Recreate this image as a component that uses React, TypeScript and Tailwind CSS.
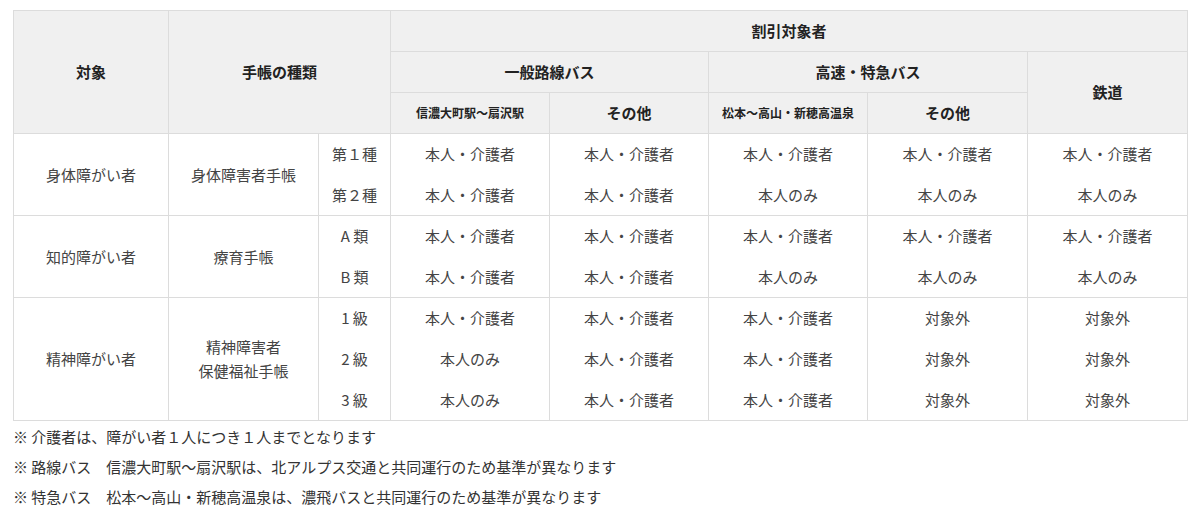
import React from 'react'

type Row = { grade: string; cells: string[] }
type Group = { target: string; book: React.ReactNode; rows: Row[] }

const both = '本人・介護者'
const self = '本人のみ'
const none = '対象外'

const groups: Group[] = [
  {
    target: '身体障がい者',
    book: '身体障害者手帳',
    rows: [
      { grade: '第１種', cells: [both, both, both, both, both] },
      { grade: '第２種', cells: [both, both, self, self, self] },
    ],
  },
  {
    target: '知的障がい者',
    book: '療育手帳',
    rows: [
      { grade: 'A 類', cells: [both, both, both, both, both] },
      { grade: 'B 類', cells: [both, both, self, self, self] },
    ],
  },
  {
    target: '精神障がい者',
    book: (
      <>
        精神障害者
        <br />
        保健福祉手帳
      </>
    ),
    rows: [
      { grade: '1 級', cells: [both, both, both, none, none] },
      { grade: '2 級', cells: [self, both, both, none, none] },
      { grade: '3 級', cells: [self, both, both, none, none] },
    ],
  },
]

const notes = [
  '※ 介護者は、障がい者１人につき１人までとなります',
  '※ 路線バス　信濃大町駅～扇沢駅は、北アルプス交通と共同運行のため基準が異なります',
  '※ 特急バス　松本～高山・新穂高温泉は、濃飛バスと共同運行のため基準が異なります',
]

const th = 'border border-[#dcdcdc] bg-[#f0f0f0] font-bold text-[#222] text-center align-middle'
const td = 'border-x border-[#dcdcdc] text-center align-middle text-[#444] font-normal'

export default function App() {
  return (
    <div className="bg-white min-h-[514px] pt-[10px] pl-[13px] text-[15px] [font-family:'Noto_Sans_CJK_JP',sans-serif] text-[#444]">
      <table className="table-fixed border-collapse w-[1174px]">
        <colgroup>
          <col className="w-[155px]" />
          <col className="w-[150px]" />
          <col className="w-[72px]" />
          <col className="w-[159px]" />
          <col className="w-[159px]" />
          <col className="w-[159px]" />
          <col className="w-[160px]" />
          <col className="w-[160px]" />
        </colgroup>
        <thead>
          <tr className="h-[41px]">
            <th rowSpan={3} className={th}>対象</th>
            <th rowSpan={3} colSpan={2} className={th}>手帳の種類</th>
            <th colSpan={5} className={th}>割引対象者</th>
          </tr>
          <tr className="h-[41px]">
            <th colSpan={2} className={th}>一般路線バス</th>
            <th colSpan={2} className={th}>高速・特急バス</th>
            <th rowSpan={2} className={th}>鉄道</th>
          </tr>
          <tr className="h-[41px]">
            <th className={`${th} text-[12px]`}>信濃大町駅～扇沢駅</th>
            <th className={th}>その他</th>
            <th className={`${th} text-[12px]`}>松本～高山・新穂高温泉</th>
            <th className={th}>その他</th>
          </tr>
        </thead>
        <tbody>
          {groups.map((g) =>
            g.rows.map((r, i) => {
              const edge = `${i === 0 ? 'border-t' : ''} ${i === g.rows.length - 1 ? 'border-b' : ''}`
              return (
                <tr key={g.target + i} className="h-[41px]">
                  {i === 0 && (
                    <>
                      <td rowSpan={g.rows.length} className={`${td} border-y leading-[24px]`}>{g.target}</td>
                      <td rowSpan={g.rows.length} className={`${td} border-y leading-[24px]`}>{g.book}</td>
                    </>
                  )}
                  <td className={`${td} ${edge}`}>{r.grade}</td>
                  {r.cells.map((c, j) => (
                    <td key={j} className={`${td} ${edge}`}>{c}</td>
                  ))}
                </tr>
              )
            })
          )}
        </tbody>
      </table>
      <div className="mt-[1px] leading-[30px] text-[#333]">
        {notes.map((n) => (
          <p key={n}>{n}</p>
        ))}
      </div>
    </div>
  )
}
